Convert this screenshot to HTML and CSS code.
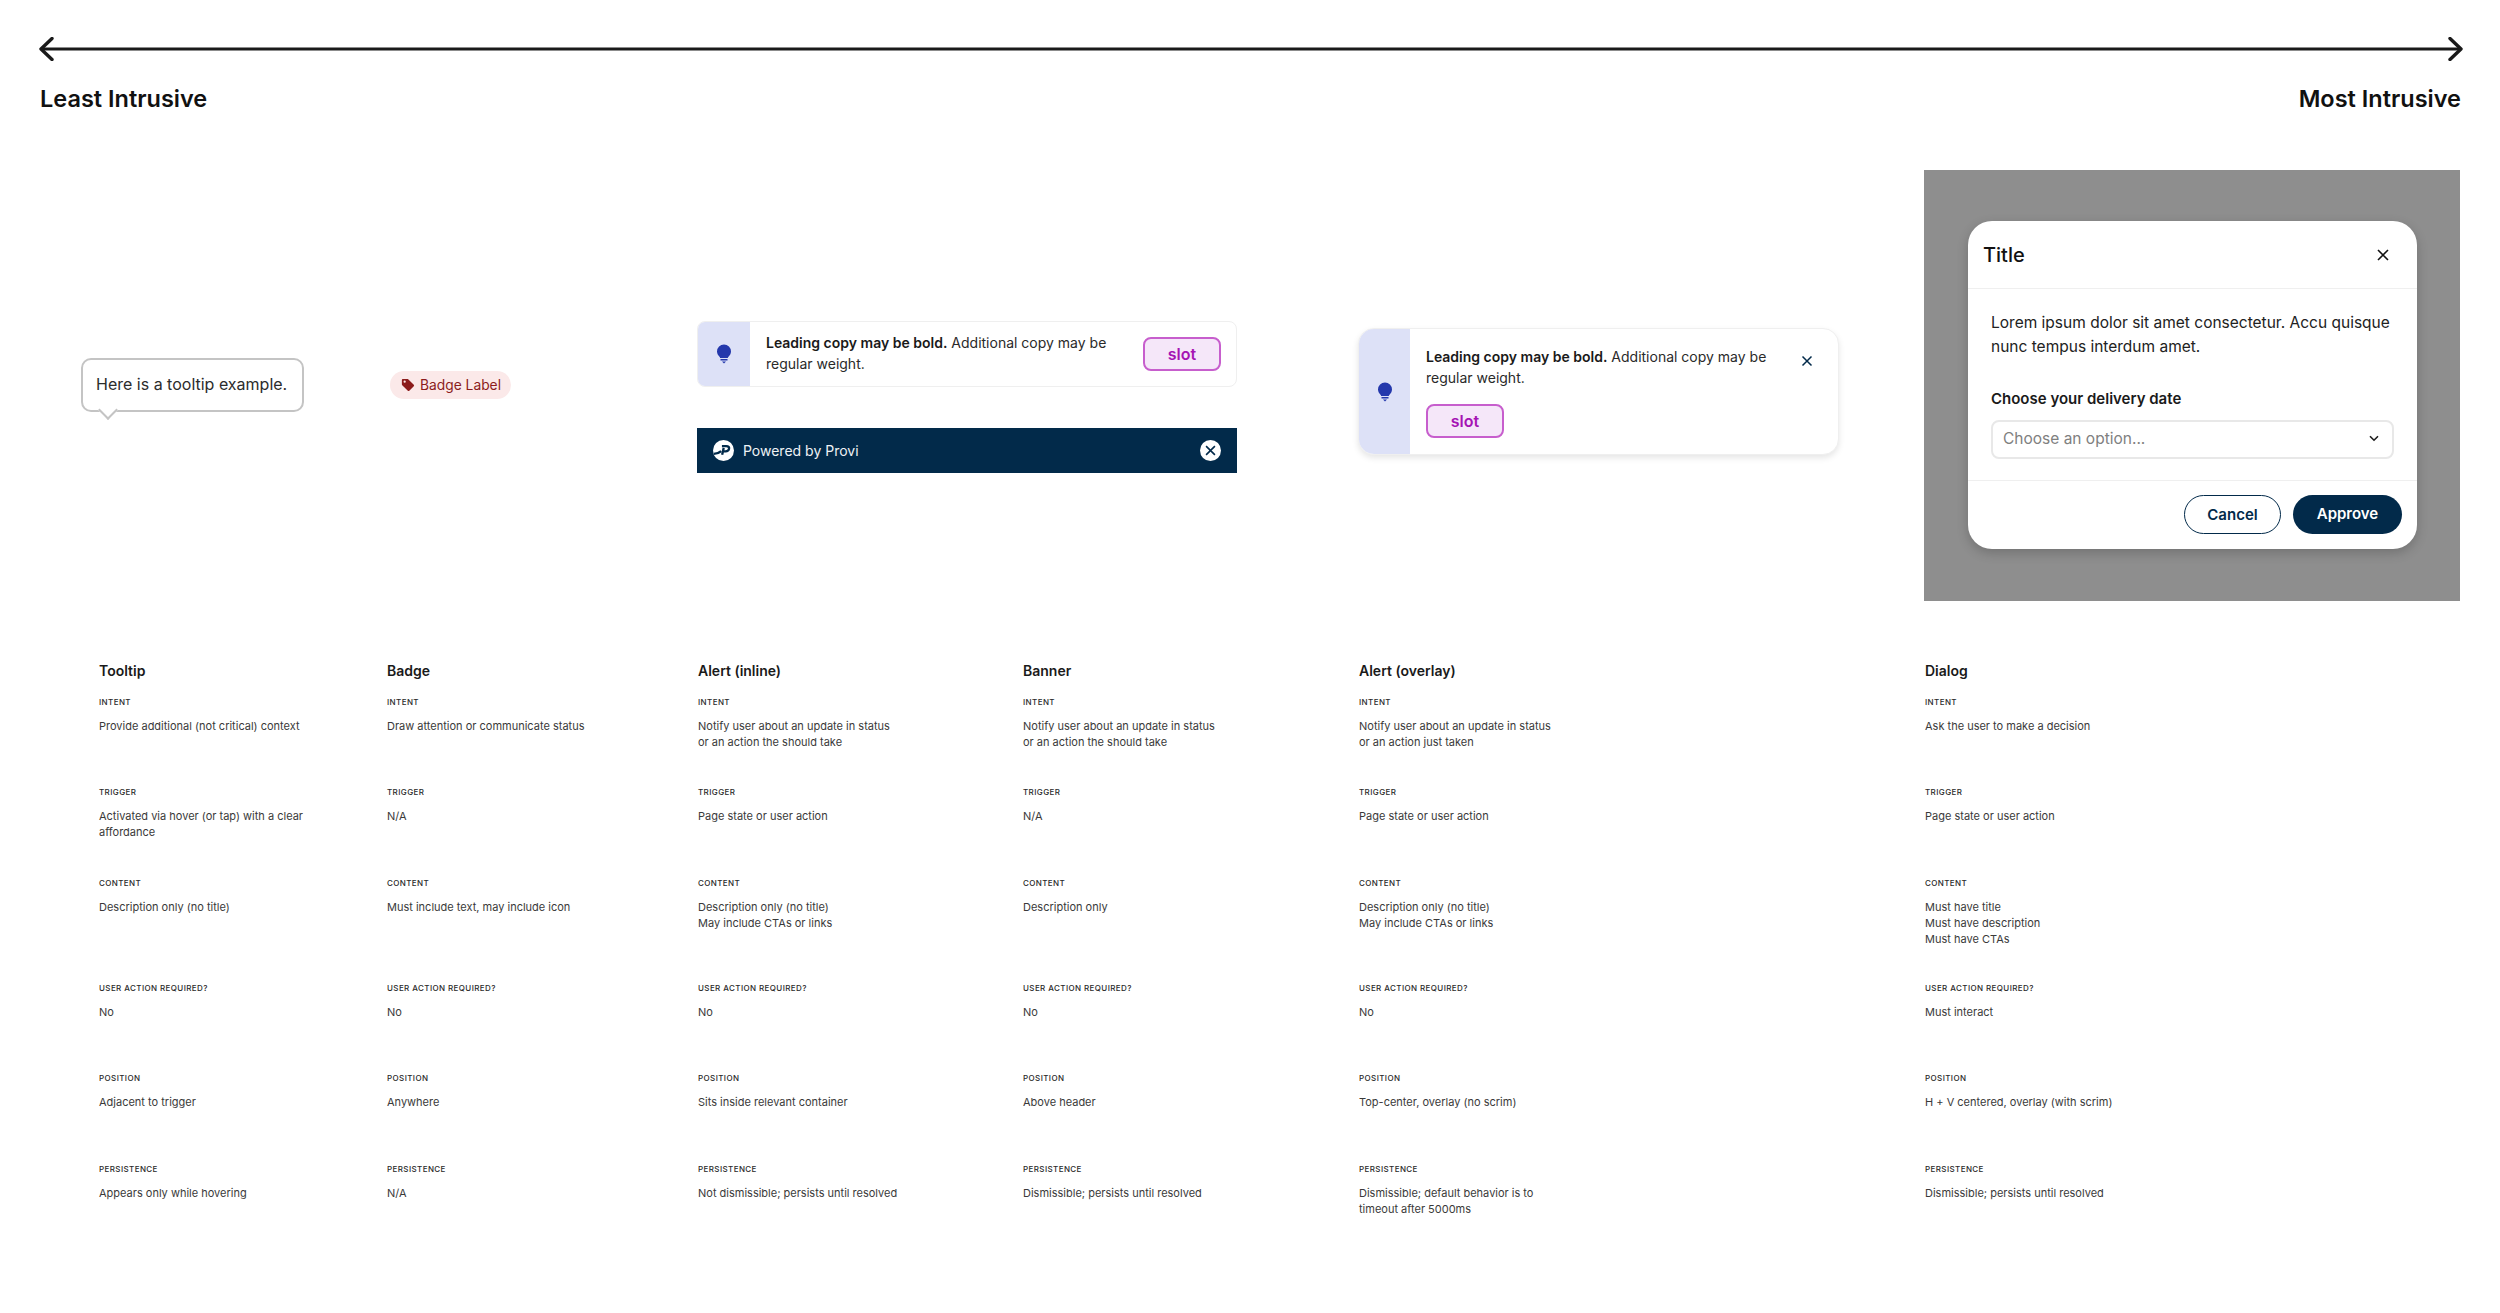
FILE: index.html
```html
<!DOCTYPE html>
<html lang="en">
<head>
<meta charset="utf-8">
<title>Messaging components</title>
<link rel="stylesheet" href="styles.css">
</head>
<body>
<header class="scale">
  <svg class="scale-arrow" viewBox="0 0 2424 24" width="2424" height="24" fill="none" stroke="#1a1a1a" stroke-width="3">
    <path d="M2 12H2422"/>
    <path d="M13 1.5 2 12l11 10.5M2411 1.5 2422 12l-11 10.5" stroke-linecap="round" stroke-linejoin="round" stroke-width="3.4"/>
  </svg>
  <div class="scale-labels"><span>Least Intrusive</span><span>Most Intrusive</span></div>
</header>

<section class="demos">
  <div class="tooltip">Here is a tooltip example.</div>

  <div class="badge">
    <svg class="badge-icon" viewBox="0 0 16 16" width="14" height="14"><path fill="#8c1c1c" d="M1 2.2C1 1.5 1.5 1 2.2 1h5c.4 0 .7.1 1 .4l6.4 6.4c.5.5.5 1.2 0 1.7l-5.1 5.1c-.5.5-1.2.5-1.7 0L1.400 8.200C1.100 7.900 1 7.600 1 7.200Zm3.200 3.300a1.300 1.300 0 1 0 0-2.600 1.300 1.300 0 0 0 0 2.600Z"/></svg>
    Badge Label
  </div>

  <div class="stack">
    <div class="alert alert-inline">
      <div class="alert-strip">
        <svg viewBox="0 0 16 20" width="16" height="20"><path fill="#2438ac" d="M8 .5A7 7 0 0 0 1 7.500c0 2.300 1.200 3.800 2.300 5 .5.500.8 1 .9 1.500h7.600c.1-.5.400-1 .9-1.500 1.100-1.200 2.300-2.700 2.300-5A7 7 0 0 0 8 .5Z"/><path stroke="#2438ac" stroke-width="1.400" d="M4.500 15.700h7"/><path fill="#2438ac" d="M6 17.500h4L8 19.500Z"/></svg>
      </div>
      <p class="alert-copy"><b>Leading copy may be bold.</b> Additional copy may be regular weight.</p>
      <div class="slot">slot</div>
    </div>

    <div class="banner">
      <svg class="banner-logo" viewBox="0 0 20 20" width="21" height="21"><circle cx="10" cy="10" r="10" fill="#fff"/><g fill="none" stroke="#022a4a" stroke-width="2.200"><path d="M8.500 5.800h4.200c2 0 2.900 1.200 2.600 2.600-.3 1.400-1.500 2.400-3.300 2.400H9.800"/><path d="M10.200 7.500 8.700 14"/><path d="M.8 13.200c2.600 0 5-.8 7-2.600"/></g></svg>
      <span class="banner-text">Powered by Provi</span>
      <svg class="banner-close" viewBox="0 0 20 20" width="21" height="21"><circle cx="10" cy="10" r="10" fill="#fff"/><path stroke="#022a4a" stroke-width="1.500" d="m5.800 5.800 8.400 8.400M14.200 5.800l-8.400 8.400"/></svg>
    </div>
  </div>

  <div class="alert alert-overlay">
    <div class="alert-strip">
      <svg viewBox="0 0 16 20" width="16" height="20"><path fill="#2438ac" d="M8 .5A7 7 0 0 0 1 7.500c0 2.300 1.200 3.800 2.300 5 .5.500.8 1 .9 1.500h7.600c.1-.5.400-1 .9-1.500 1.100-1.200 2.300-2.700 2.300-5A7 7 0 0 0 8 .5Z"/><path stroke="#2438ac" stroke-width="1.400" d="M4.500 15.700h7"/><path fill="#2438ac" d="M6 17.500h4L8 19.500Z"/></svg>
    </div>
    <div class="overlay-body">
      <p class="alert-copy"><b>Leading copy may be bold.</b> Additional copy may be regular weight.</p>
      <div class="slot">slot</div>
    </div>
    <svg class="overlay-close" viewBox="0 0 12 12" width="12" height="12"><path stroke="#022a4a" stroke-width="1.500" fill="none" d="m1.500 1.500 9 9M10.500 1.500l-9 9"/></svg>
  </div>

  <div class="scrim">
    <div class="dialog">
      <div class="dialog-head">
        <h2>Title</h2>
        <svg viewBox="0 0 14 14" width="14" height="14"><path stroke="#111" stroke-width="1.600" fill="none" d="m2 2 10 10M12 2 2 12"/></svg>
      </div>
      <div class="dialog-body">
        <p class="dialog-text">Lorem ipsum dolor sit amet consectetur. Accu quisque nunc tempus interdum amet.</p>
        <div class="field-label">Choose your delivery date</div>
        <div class="select">
          <span>Choose an option...</span>
          <svg viewBox="0 0 10 7" width="10" height="7"><path stroke="#1c1c1c" stroke-width="1.600" fill="none" d="m1 1.200 4 4 4-4"/></svg>
        </div>
      </div>
      <div class="dialog-foot">
        <div class="btn btn-outline">Cancel</div>
        <div class="btn btn-solid">Approve</div>
      </div>
    </div>
  </div>
</section>

<section class="specs">
  <h3>Tooltip</h3><h3>Badge</h3><h3>Alert (inline)</h3><h3>Banner</h3><h3>Alert (overlay)</h3><h3>Dialog</h3>

  <div class="spec r-intent"><h4>INTENT</h4><p>Provide additional (not critical) context</p></div>
  <div class="spec r-intent"><h4>INTENT</h4><p>Draw attention or communicate status</p></div>
  <div class="spec r-intent"><h4>INTENT</h4><p>Notify user about an update in status<br>or an action the should take</p></div>
  <div class="spec r-intent"><h4>INTENT</h4><p>Notify user about an update in status<br>or an action the should take</p></div>
  <div class="spec r-intent"><h4>INTENT</h4><p>Notify user about an update in status<br>or an action just taken</p></div>
  <div class="spec r-intent"><h4>INTENT</h4><p>Ask the user to make a decision</p></div>

  <div class="spec r-trigger"><h4>TRIGGER</h4><p>Activated via hover (or tap) with a clear<br>affordance</p></div>
  <div class="spec r-trigger"><h4>TRIGGER</h4><p>N/A</p></div>
  <div class="spec r-trigger"><h4>TRIGGER</h4><p>Page state or user action</p></div>
  <div class="spec r-trigger"><h4>TRIGGER</h4><p>N/A</p></div>
  <div class="spec r-trigger"><h4>TRIGGER</h4><p>Page state or user action</p></div>
  <div class="spec r-trigger"><h4>TRIGGER</h4><p>Page state or user action</p></div>

  <div class="spec r-content"><h4>CONTENT</h4><p>Description only (no title)</p></div>
  <div class="spec r-content"><h4>CONTENT</h4><p>Must include text, may include icon</p></div>
  <div class="spec r-content"><h4>CONTENT</h4><p>Description only (no title)<br>May include CTAs or links</p></div>
  <div class="spec r-content"><h4>CONTENT</h4><p>Description only</p></div>
  <div class="spec r-content"><h4>CONTENT</h4><p>Description only (no title)<br>May include CTAs or links</p></div>
  <div class="spec r-content"><h4>CONTENT</h4><p>Must have title<br>Must have description<br>Must have CTAs</p></div>

  <div class="spec r-action"><h4>USER ACTION REQUIRED?</h4><p>No</p></div>
  <div class="spec r-action"><h4>USER ACTION REQUIRED?</h4><p>No</p></div>
  <div class="spec r-action"><h4>USER ACTION REQUIRED?</h4><p>No</p></div>
  <div class="spec r-action"><h4>USER ACTION REQUIRED?</h4><p>No</p></div>
  <div class="spec r-action"><h4>USER ACTION REQUIRED?</h4><p>No</p></div>
  <div class="spec r-action"><h4>USER ACTION REQUIRED?</h4><p>Must interact</p></div>

  <div class="spec r-position"><h4>POSITION</h4><p>Adjacent to trigger</p></div>
  <div class="spec r-position"><h4>POSITION</h4><p>Anywhere</p></div>
  <div class="spec r-position"><h4>POSITION</h4><p>Sits inside relevant container</p></div>
  <div class="spec r-position"><h4>POSITION</h4><p>Above header</p></div>
  <div class="spec r-position"><h4>POSITION</h4><p>Top-center, overlay (no scrim)</p></div>
  <div class="spec r-position"><h4>POSITION</h4><p>H + V centered, overlay (with scrim)</p></div>

  <div class="spec"><h4>PERSISTENCE</h4><p>Appears only while hovering</p></div>
  <div class="spec"><h4>PERSISTENCE</h4><p>N/A</p></div>
  <div class="spec"><h4>PERSISTENCE</h4><p>Not dismissible; persists until resolved</p></div>
  <div class="spec"><h4>PERSISTENCE</h4><p>Dismissible; persists until resolved</p></div>
  <div class="spec"><h4>PERSISTENCE</h4><p>Dismissible; default behavior is to<br>timeout after 5000ms</p></div>
  <div class="spec"><h4>PERSISTENCE</h4><p>Dismissible; persists until resolved</p></div>
</section>
</body>
</html>
```
FILE: styles.css
```css
* { box-sizing: border-box; }
html, body { margin: 0; padding: 0; }
body {
  background: #fff;
  color: #1a1a1a;
  font-family: Inter, "Liberation Sans", sans-serif;
  height: 1313px;
  overflow: hidden;
}
h2, h3, h4, p { margin: 0; font: inherit; }

.scale { padding: 37px 38px 0 39px; }
.scale-arrow { display: block; }
.scale-labels {
  display: flex;
  justify-content: space-between;
  margin-top: 23px;
  padding: 0 1px 0 1px;
  font-size: 23.500px;
  line-height: 30px;
  font-weight: 600;
  color: #111;
}

.demos {
  display: grid;
  grid-template-columns: 309px 307px 661px 566px 536px;
  align-items: start;
  height: 432px;
  margin-top: 56px;
  padding-left: 81px;
}

.tooltip {
  position: relative;
  width: 223px;
  height: 54px;
  margin-top: 188px;
  border: 2px solid #c4c4c4;
  border-radius: 10px;
  padding: 0 0 0 13px;
  font-size: 16px;
  line-height: 48px;
  color: #2c2c2c;
  background: #fff;
}
.tooltip::after {
  content: "";
  position: absolute;
  left: 18px;
  bottom: -7px;
  width: 12px;
  height: 12px;
  background: #fff;
  border-right: 2px solid #c4c4c4;
  border-bottom: 2px solid #c4c4c4;
  transform: rotate(45deg);
}

.badge {
  display: inline-flex;
  justify-self: start;
  align-items: center;
  gap: 5px;
  height: 28px;
  margin-top: 201px;
  padding: 0 10px 0 11px;
  border-radius: 14px;
  background: #fbe9e9;
  color: #8c1c1c;
  font-size: 13.800px;
}

.stack { display: flex; flex-direction: column; width: 540px; margin-top: 151px; gap: 41px; }

.alert { display: flex; background: #fff; border: 1px solid #efefef; color: #2a2a2a; overflow: hidden; }
.alert-strip { display: flex; align-items: center; justify-content: center; flex: none; background: #dde1f7; }
.alert-copy { font-size: 14px; line-height: 21px; }
.alert-copy b { font-weight: 600; color: #1a1a1a; }
.slot {
  flex: none;
  width: 78px;
  height: 34px;
  border: 2px solid #c75ecd;
  border-radius: 8px;
  background: #f5e7f9;
  color: #a514b4;
  font-size: 16px;
  font-weight: 600;
  line-height: 30px;
  text-align: center;
}

.alert-inline { align-items: stretch; height: 66px; border-radius: 8px; }
.alert-inline .alert-strip { width: 52px; }
.alert-inline .alert-copy { flex: 1; padding: 10px 28px 0 16px; }
.alert-inline .slot { align-self: center; margin-right: 15px; }

.banner { display: flex; align-items: center; height: 45px; padding: 0 16px; background: #022a4a; color: #fff; font-size: 14px; }
.banner-text { flex: 1; padding-left: 9px; color: #eef2f5; }

.alert-overlay {
  position: relative;
  width: 481px;
  height: 127px;
  margin-top: 158px;
  border-radius: 16px;
  box-shadow: 0 3px 6px rgba(0,0,0,.1);
}
.alert-overlay .alert-strip { width: 51px; }
.overlay-body { padding: 17px 0 0 16px; width: 390px; }
.overlay-body .slot { margin-top: 16px; }
.overlay-close { position: absolute; right: 25px; top: 26px; }

.scrim { display: flex; width: 536px; height: 431px; padding: 51px 0 0 44px; background: #8e8e8e; }
.dialog {
  width: 449px;
  height: 328px;
  border-radius: 24px;
  background: #fff;
  box-shadow: 0 4px 12px rgba(0,0,0,.2);
  overflow: hidden;
}
.dialog-head {
  display: flex;
  align-items: center;
  justify-content: space-between;
  height: 68px;
  padding: 0 27px 0 15px;
  border-bottom: 1px solid #efefef;
}
.dialog-head h2 { font-size: 20px; font-weight: 500; color: #111; }
.dialog-body { height: 192px; padding: 22px 23px 0 23px; border-bottom: 1px solid #efefef; }
.dialog-text { font-size: 15.500px; line-height: 24px; color: #222; }
.field-label { margin-top: 29px; font-size: 15px; line-height: 22px; font-weight: 600; color: #1a1a1a; }
.select {
  display: flex;
  align-items: center;
  justify-content: space-between;
  height: 39px;
  margin-top: 10px;
  padding: 0 13px 2px 10px;
  border: 2px solid #e8e8e8;
  border-radius: 8px;
  color: #808080;
  font-size: 15.500px;
}
.dialog-foot { display: flex; justify-content: flex-end; gap: 12px; padding: 14px 15px 0 0; }
.btn { height: 39px; border-radius: 20px; font-size: 15px; font-weight: 600; line-height: 37px; text-align: center; }
.btn-outline { width: 97px; border: 1.500px solid #022a4a; color: #022a4a; background: #fff; }
.btn-solid { width: 109px; background: #022a4a; color: #fff; }

.specs {
  display: grid;
  grid-template-columns: 288px 311px 325px 336px 566px 1fr;
  margin-top: 60px;
  padding-left: 99px;
}
.specs h3 { height: 34px; font-size: 14px; line-height: 18px; font-weight: 600; color: #1a1a1a; }
.spec h4 { font-size: 8px; line-height: 12px; font-weight: 500; letter-spacing: .4px; color: #2a2a2a; margin-bottom: 10px; }
.spec p { font-size: 11px; line-height: 16px; color: #3a3a3a; }
.r-intent { height: 90px; }
.r-trigger { height: 91px; }
.r-content { height: 105px; }
.r-action { height: 90px; }
.r-position { height: 91px; }
```
